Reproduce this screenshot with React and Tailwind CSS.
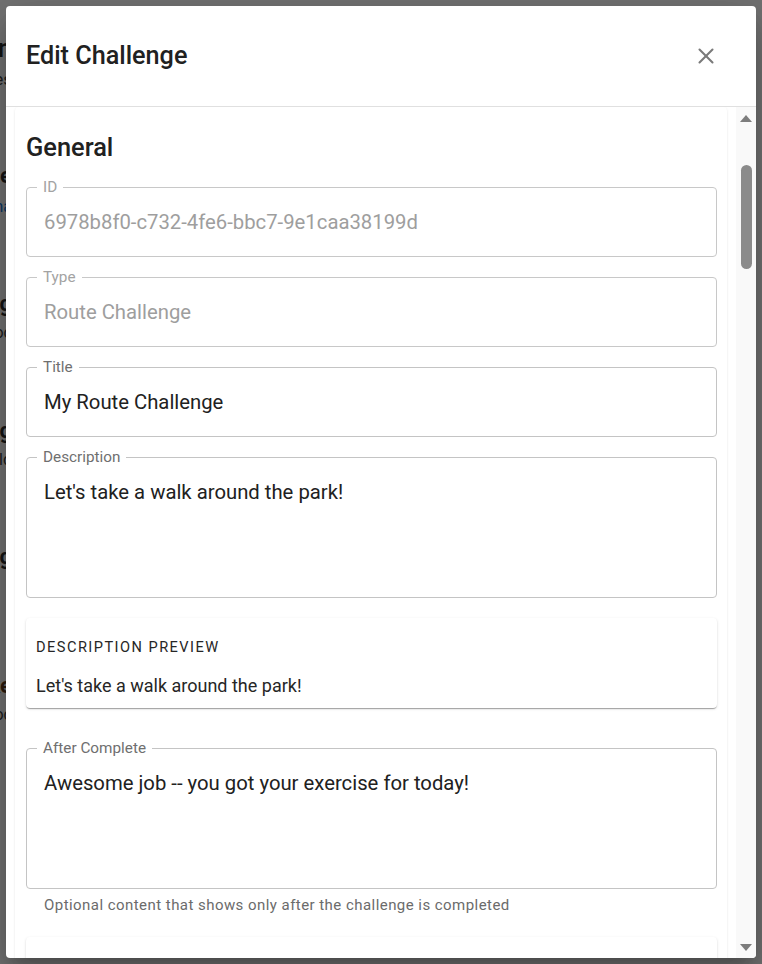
import { X } from "lucide-react";

function Sliver({ className, children }) {
  return (
    <div className={`flex justify-end whitespace-nowrap ${className}`}>
      {children}
    </div>
  );
}

function OutlinedField({ label, value, disabled, multiline, helper }) {
  return (
    <div>
      <div
        className={`relative rounded border ${
          disabled ? "border-[#c8c8c8]" : "border-[#c4c4c4]"
        } ${multiline ? "h-[141px]" : "h-[70px]"}`}
      >
        <span
          className={`absolute left-[10px] top-[-11px] bg-white px-[6px] text-[15.3px] leading-[20px] ${
            disabled ? "text-[#a3a3a3]" : "text-[#6f6f6f]"
          }`}
        >
          {label}
        </span>
        <div
          className={`px-[17px] text-[20.3px] ${
            multiline ? "pt-[20px] leading-[28px]" : "flex h-full items-center"
          } ${disabled ? "text-[#9e9e9e]" : "text-[#212121]"}`}
        >
          {value}
        </div>
      </div>
      {helper && (
        <p className="ml-[18px] mt-[4px] text-[15px] leading-[24px] tracking-[0.03em] text-[#6b6b6b]">
          {helper}
        </p>
      )}
    </div>
  );
}

export default function App() {
  return (
    <div className="relative h-[964px] overflow-hidden bg-[#727272] font-['Roboto','Liberation_Sans',sans-serif]">
      {/* page behind the dialog */}
      <div className="w-[12px] overflow-hidden pt-[33px]">
        <Sliver className="h-[30px] items-center text-[26px] font-bold text-[#151515]">Edit Challenge Plan</Sliver>
        <Sliver className="mt-[7px] h-[20px] items-center text-[17px] text-[#1c1c1c]">Manage challenges</Sliver>
        <Sliver className="mt-[70px] h-[30px] items-center text-[22px] font-bold text-[#151515]">Route Challe</Sliver>
        <Sliver className="mt-[7px] h-[20px] items-center text-[16px] text-[#0b3662]">ma</Sliver>
        <Sliver className="mt-[71px] h-[30px] items-center text-[22px] font-bold text-[#151515]">Walking</Sliver>
        <Sliver className="mt-[5px] h-[20px] items-center text-[16px] text-[#1c1c1c]">Loc</Sliver>
        <Sliver className="mt-[72px] h-[30px] items-center text-[22px] font-bold text-[#151515]">Running</Sliver>
        <Sliver className="mt-[5px] h-[20px] items-center text-[16px] text-[#1c1c1c]">Held</Sliver>
        <Sliver className="mt-[71px] h-[30px] items-center text-[22px] font-bold text-[#151515]">Hiking</Sliver>
        <Sliver className="mt-[99px] h-[30px] items-center text-[22px] font-bold text-[#2b1a0c]">Bike</Sliver>
        <Sliver className="mt-[5px] h-[20px] items-center text-[16px] text-[#1c1c1c]">Loc</Sliver>
      </div>

      {/* dialog */}
      <div className="absolute left-[6px] top-[6px] flex h-[952px] w-[750px] flex-col overflow-hidden rounded bg-white shadow-[0_11px_15px_-7px_rgba(0,0,0,0.2),0_24px_38px_3px_rgba(0,0,0,0.14),0_9px_46px_8px_rgba(0,0,0,0.12)]">
        <div className="flex h-[101px] shrink-0 items-center justify-between border-b border-[#e0e0e0] pl-[20px] pr-[34px]">
          <h2 className="text-[25.2px] font-medium leading-[32px] text-[#212121]">Edit Challenge</h2>
          <button className="flex h-[32px] w-[32px] items-center justify-center text-[#7a7a7a]">
            <X size={26} strokeWidth={1.9} />
          </button>
        </div>

        <div className="flex min-h-0 flex-1">
          <div className="min-w-0 flex-1 overflow-hidden px-[9px]">
            <div className="rounded bg-white pb-6 pl-[11px] pr-[10px] pt-[24px] shadow-[0_2px_1px_-1px_rgba(0,0,0,0.12),0_1px_1px_0_rgba(0,0,0,0.08),0_1px_3px_0_rgba(0,0,0,0.08)]">
              <h3 className="h-[32px] text-[25.4px] font-medium leading-[32px] text-[#212121]">General</h3>

              <div className="mt-[24px] flex flex-col gap-[20px]">
                <OutlinedField label="ID" value="6978b8f0-c732-4fe6-bbc7-9e1caa38199d" disabled />
                <OutlinedField label="Type" value="Route Challenge" disabled />
                <OutlinedField label="Title" value="My Route Challenge" />
                <OutlinedField label="Description" value="Let's take a walk around the park!" multiline />
              </div>

              <div className="mt-[20px] rounded bg-white px-[10px] pb-[10px] pt-[9px] shadow-[0_2px_1px_-1px_rgba(0,0,0,0.2),0_1px_1px_0_rgba(0,0,0,0.14),0_1px_3px_0_rgba(0,0,0,0.12)]">
                <div className="h-[38px] text-[14.6px] uppercase leading-[40px] tracking-[0.1em] text-[#262626]">
                  Description Preview
                </div>
                <p className="mt-[9px] text-[18px] leading-[24px] text-[#262626]">
                  Let's take a walk around the park!
                </p>
              </div>

              <div className="mt-[40px]">
                <OutlinedField
                  label="After Complete"
                  value="Awesome job -- you got your exercise for today!"
                  multiline
                  helper="Optional content that shows only after the challenge is completed"
                />
              </div>

              <div className="mt-[20px] h-[120px] rounded bg-white shadow-[0_2px_1px_-1px_rgba(0,0,0,0.2),0_1px_1px_0_rgba(0,0,0,0.14),0_1px_3px_0_rgba(0,0,0,0.12)]" />
            </div>
          </div>

          {/* scrollbar */}
          <div className="flex w-[20px] shrink-0 flex-col items-center bg-[#f9f9f9] pb-[7px] pt-[8px]">
            <svg width="12" height="7" viewBox="0 0 12 7">
              <path d="M6 0 12 7H0z" fill="#7d7d7d" />
            </svg>
            <div className="mt-[43px] h-[104px] w-[11px] rounded-full bg-[#8b8b8b]" />
            <div className="flex-1" />
            <svg width="12" height="7" viewBox="0 0 12 7">
              <path d="M0 0h12L6 7z" fill="#7d7d7d" />
            </svg>
          </div>
        </div>
      </div>
    </div>
  );
}
